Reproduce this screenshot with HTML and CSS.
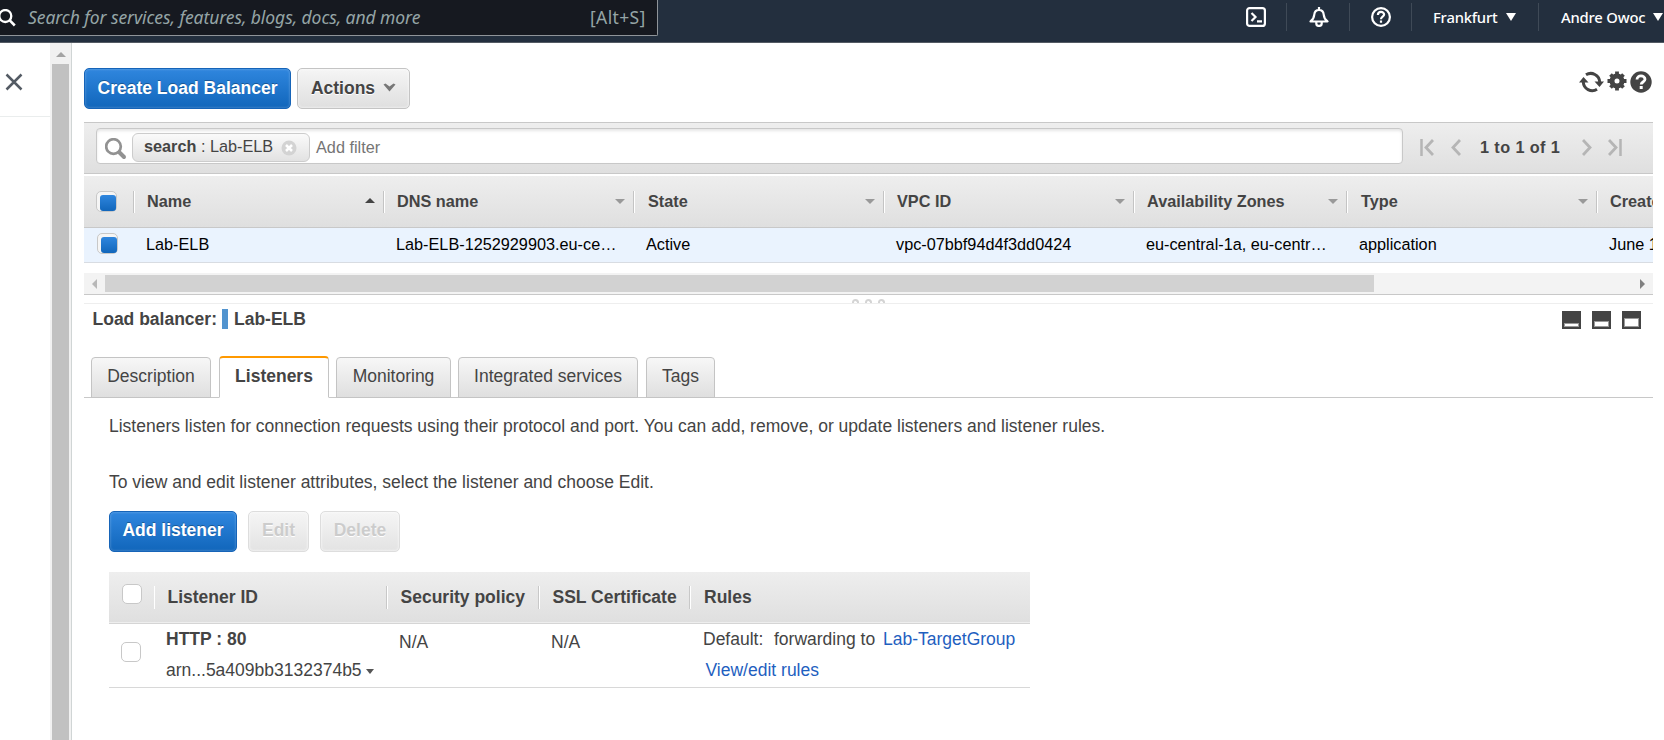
FILE: index.html
```html
<!DOCTYPE html>
<html lang="en">
<head>
<meta charset="utf-8">
<title>Load Balancers</title>
<link rel="stylesheet" href="styles.css">
</head>
<body>
<header class="topbar">
  <div class="global-search">
    <svg class="gs-icon" width="17" height="20" viewBox="0 0 17 20"><circle cx="5.300" cy="7" r="6" fill="none" stroke="#fff" stroke-width="2.300"/><path d="M9.500 11.200l5.300 5.300" stroke="#fff" stroke-width="2.600"/></svg>
    <span class="gs-text">Search for services, features, blogs, docs, and more</span>
    <span class="gs-key">[Alt+S]</span>
  </div>
  <nav class="top-nav">
    <span class="nav-item nav-shell"><svg width="20" height="20" viewBox="0 0 20 20" fill="none" stroke="#fff" stroke-width="2.200"><rect x="1.100" y="1.100" width="17.800" height="17.800" rx="2.500"/><path d="M5.500 6l4 4-4 4M11 14.300h5"/></svg></span>
    <span class="nav-item nav-bell"><svg width="20" height="20" viewBox="0 0 20 20" fill="none" stroke="#fff" stroke-width="2.200" stroke-linejoin="round"><path d="M10 0v3M1.500 14.500c3-2 3.500-4 3.800-7C5.600 4.500 7.500 3 10 3s4.400 1.500 4.700 4.500c.3 3 .8 5 3.800 7z"/><path d="M7.300 15v1.500c0 3.300 5.400 3.300 5.400 0V15"/></svg></span>
    <span class="nav-item nav-help"><svg width="20" height="20" viewBox="0 0 20 20" fill="none" stroke="#fff" stroke-width="2.200"><circle cx="10" cy="10" r="8.900"/><path d="M6.900 8c0-4 6.200-4 6.200-.5 0 2.200-3.100 2.200-3.100 4.700M10 13.500v2.200"/></svg></span>
    <span class="nav-item nav-region"><span class="region-text">Frankfurt</span><i class="tri"></i></span>
    <span class="nav-item nav-user"><span class="user-text">Andre Owoc</span><i class="tri"></i></span>
  </nav>
</header>
<div class="body">
  <aside class="side">
    <div class="side-head"><svg width="18" height="18" viewBox="0 0 18 18"><path d="M1.500 1.500l15 15M16.500 1.500l-15 15" stroke="#545b64" stroke-width="2.500"/></svg></div>
  </aside>
  <div class="vscroll"><i class="up"></i><div class="vthumb"></div></div>
  <main class="content">
    <div class="actions">
      <button class="btn primary create">Create Load Balancer</button>
      <button class="btn menu">Actions <svg width="13" height="9" viewBox="0 0 13 9"><path d="M.5 1.500L2.500 .5l4 3 4-3 2 1-6 7z" fill="#777"/></svg></button>
      <div class="tools">
        <svg width="25" height="22" viewBox="0 0 25 22"><path d="M7 3.800A9 9 0 0 1 20.700 11M18 18.300A9 9 0 0 1 4.300 11" fill="none" stroke="#444" stroke-width="3"/><path d="M0 11.500L4.500 6l5 5.500zM15.500 10.500h9.500L20.500 16z" fill="#444"/></svg>
        <svg class="gear" width="20" height="20" viewBox="0 0 20 20"><circle cx="10" cy="10" r="5" fill="none" stroke="#444" stroke-width="5"/><path d="M10 .5v4M10 15.500v4M.5 10h4M15.500 10h4M3.500 3.500l3 3M13.500 13.500l3 3M16.500 3.500l-3 3M6.500 13.500l-3 3" stroke="#444" stroke-width="3.800"/></svg>
        <svg class="q" width="22" height="22" viewBox="0 0 22 22"><circle cx="11" cy="11" r="10.700" fill="#444"/><path d="M7 8.500C7 3.500 15 4 15 8.200c0 2.800-3.800 2.800-3.800 5.300" fill="none" stroke="#fff" stroke-width="2.800"/><path d="M9.700 15h3v3h-3z" fill="#fff"/></svg>
      </div>
    </div>
    <div class="filterbar">
      <div class="filter">
        <svg class="mag" width="22" height="22" viewBox="0 0 22 22"><circle cx="8.500" cy="8.500" r="7.300" fill="none" stroke="#929292" stroke-width="2.700"/><path d="M14.500 14.500l4.500 4.500" stroke="#929292" stroke-width="4" stroke-linecap="round"/></svg>
        <span class="chip"><span class="chip-text"><b>search</b> : Lab-ELB</span><svg width="16" height="16" viewBox="0 0 16 16"><circle cx="8" cy="8" r="7.500" fill="#d3d3d3"/><path d="M5 5l6 6M11 5l-6 6" stroke="#fff" stroke-width="2.500"/></svg></span>
        <span class="add">Add filter</span>
      </div>
      <svg class="pg" width="14" height="18" viewBox="0 0 14 18" fill="none" stroke="#b5b5b5"><path d="M1.500 0v17" stroke-width="2.500"/><path d="M13 1L6 8.500l7 7.500" stroke-width="2.800"/></svg>
      <svg class="pg prev" width="10" height="18" viewBox="0 0 10 18" fill="none" stroke="#b5b5b5" stroke-width="2.800"><path d="M9 1L2 8.500 9 16"/></svg>
      <b class="pg-text">1 to 1 of 1</b>
      <svg class="pg next" width="10" height="18" viewBox="0 0 10 18" fill="none" stroke="#b5b5b5" stroke-width="2.800"><path d="M1 1l7 7.500L1 16"/></svg>
      <svg class="pg last" width="14" height="18" viewBox="0 0 14 18" fill="none" stroke="#b5b5b5"><path d="M1 1l7 7.500L1 16" stroke-width="2.800"/><path d="M12.500 0v17" stroke-width="2.500"/></svg>
    </div>
    <div class="grid-row grid-head">
      <div class="cell check"><i class="cb on"></i></div>
      <div class="cell">Name<i class="sort asc"></i></div>
      <div class="cell">DNS name<i class="sort"></i></div>
      <div class="cell state">State<i class="sort"></i></div>
      <div class="cell">VPC ID<i class="sort"></i></div>
      <div class="cell">Availability Zones<i class="sort"></i></div>
      <div class="cell type">Type<i class="sort"></i></div>
      <div class="cell">Created At</div>
    </div>
    <div class="grid-row grid-data">
      <div class="cell check"><i class="cb on"></i></div>
      <div class="cell">Lab-ELB</div>
      <div class="cell">Lab-ELB-1252929903.eu-ce…</div>
      <div class="cell">Active</div>
      <div class="cell">vpc-07bbf94d4f3dd0424</div>
      <div class="cell">eu-central-1a, eu-centr…</div>
      <div class="cell">application</div>
      <div class="cell">June 14</div>
    </div>
    <div class="hscroll"><i class="left"></i><div class="hthumb"></div><i class="right"></i></div>
    <div class="splitter"><i></i><i></i><i></i></div>
    <div class="detail-head">
      <span class="dh-label">Load balancer:</span><i class="dh-bar"></i><span class="dh-name">Lab-ELB</span>
      <div class="panes"><i class="pane small"></i><i class="pane half"></i><i class="pane full"></i></div>
    </div>
    <div class="tabs">
      <div class="tab t1">Description</div>
      <div class="tab t2 active">Listeners</div>
      <div class="tab t3">Monitoring</div>
      <div class="tab t4">Integrated services</div>
      <div class="tab t5">Tags</div>
    </div>
    <section class="panel">
      <p class="p1">Listeners listen for connection requests using their protocol and port. You can add, remove, or update listeners and listener rules.</p>
      <p class="p2">To view and edit listener attributes, select the listener and choose Edit.</p>
      <div class="panel-actions">
        <button class="btn primary addl">Add listener</button>
        <button class="btn off edit">Edit</button>
        <button class="btn off del">Delete</button>
      </div>
      <div class="ltable">
        <div class="lrow lhead">
          <div class="lc lcheck"><i class="cb"></i></div>
          <div class="lc">Listener ID</div>
          <div class="lc">Security policy</div>
          <div class="lc">SSL Certificate</div>
          <div class="lc">Rules</div>
        </div>
        <div class="lrow ldata">
          <div class="lc lcheck"><i class="cb"></i></div>
          <div class="lc"><b class="proto">HTTP : 80</b><span class="arn">arn...5a409bb3132374b5<i class="caret"></i></span></div>
          <div class="lc na">N/A</div>
          <div class="lc na">N/A</div>
          <div class="lc"><span class="rule"><span class="def">Default:</span><span class="fwd">forwarding to</span><a>Lab-TargetGroup</a></span><a class="view">View/edit rules</a></div>
        </div>
      </div>
    </section>
  </main>
</div>
</body>
</html>
```

FILE: styles.css
```css
*, *::before, *::after { box-sizing: border-box; }
body { margin: 0; width: 1664px; height: 740px; overflow: hidden; background: #fff; color: #444; font: 17.5px "Liberation Sans", Arial, sans-serif; display: flex; flex-direction: column; }
svg { display: block; flex: none; }
i { flex: none; }
p { margin: 0; }

/* Top navigation */
.topbar { height: 43px; flex: none; background: #232f3e; border-bottom: 1px solid #545b64; display: flex; justify-content: space-between; font-family: "Noto Sans", "Open Sans", sans-serif; overflow: hidden; }
.global-search { width: 658px; height: 36px; background: #161920; border: solid #8f9499; border-width: 0 1px 1px 0; border-radius: 0 0 2px 0; display: flex; color: #95a5a6; font-size: 17.5px; line-height: 34px; white-space: nowrap; }
.gs-icon { margin-top: 9px; }
.gs-text { margin-left: 11px; width: 562px; font-style: italic; letter-spacing: -0.07px; }
.gs-key { letter-spacing: 0.35px; }
.top-nav { display: flex; height: 28px; margin-top: 3px; color: #fff; font-size: 14.8px; font-weight: 500; white-space: nowrap; }
.nav-item { display: flex; align-items: center; border-right: 1px solid #3f4a57; }
.nav-shell { width: 41px; }
.nav-bell { width: 63px; padding-left: 22px; }
.nav-help { width: 62px; padding-left: 21px; }
.nav-region { width: 127px; padding-left: 21px; }
.nav-user { width: 125px; padding-left: 22px; border: 0; }
.region-text { width: 73px; letter-spacing: -0.2px; }
.user-text { width: 92px; letter-spacing: -0.2px; }
.tri { border: solid transparent; border-width: 8px 5px 0; border-top-color: #fff; }

/* Side panel and its scrollbar */
.body { flex: 1; display: flex; }
.side { width: 50px; }
.side-head { height: 74px; border-bottom: 1px solid #eaeded; padding: 30px 0 0 5px; }
.vscroll { width: 22px; background: #f1f1f1; border-right: 1px solid #d0d5d5; display: flex; flex-direction: column; align-items: center; padding-top: 9px; }
.up { border: solid transparent; border-width: 0 5px 5px; border-bottom-color: #a3a3a3; }
.vthumb { width: 17px; flex: 1; margin-top: 7px; background: #c1c1c1; }
.content { width: 1569px; margin-left: 12px; display: flex; flex-direction: column; }

/* Buttons */
.actions { display: flex; height: 79px; padding-top: 25px; gap: 6px; }
.btn { height: 41px; padding: 0 0 2px; border: 1px solid #c4c4c4; border-radius: 5px; background: linear-gradient(#f5f5f5, #dfdfdf); box-shadow: inset 0 0 2px 1px rgba(255,255,255,.45); color: #444; font: bold 17.5px "Liberation Sans", Arial, sans-serif; text-shadow: 0 1px 0 #fff; display: flex; align-items: center; justify-content: center; white-space: nowrap; }
.btn.primary { border-color: #1664b8; background: linear-gradient(#2f86de, #1166bb); box-shadow: inset 0 0 2px 1px rgba(255,255,255,.15); color: #fff; text-shadow: 0 -1px 0 rgba(0,0,0,.3); }
.btn.off { color: #ccc; border-color: #ddd; background: linear-gradient(#f5f5f5, #e3e3e3); }
.create { width: 207px; padding-bottom: 0; }
.menu { width: 113px; gap: 8px; padding-bottom: 0; }
.menu svg { margin-bottom: 3px; }
.tools { margin-left: auto; margin-top: 3px; padding-right: 1px; display: flex; height: 22px; }
.gear { margin: 0 3px 0; }

/* Filter bar */
.filterbar { height: 52px; border: solid #c8c8c8; border-width: 1px 0; background: linear-gradient(#eee, #dfdfdf); display: flex; padding: 5px 0 0 12px; }
.filter { width: 1307px; height: 36px; background: #fff; border: 1px solid #c8c8c8; border-radius: 4px; box-shadow: inset 0 2px 3px rgba(0,0,0,.1); display: flex; padding: 4px 0 0 8px; font-size: 16.25px; }
.mag { margin: 5px 5px 0 0; }
.chip { width: 178px; height: 29px; border: 1px solid #ccc; border-radius: 6px; background: linear-gradient(#fafafa, #e2e2e2); display: flex; align-items: center; padding-left: 11px; line-height: 25px; white-space: nowrap; }
.chip-text { width: 137px; padding-bottom: 2px; }
.add { margin-left: 6px; line-height: 28px; color: #757575; }
.pg { margin: 11px 0 0 17px; }
.pg.prev { margin-left: 17px; }
.pg-text { margin: 10px 0 0 19px; width: 82px; font-size: 16.25px; line-height: 19px; letter-spacing: 0.4px; white-space: nowrap; }
.pg.next { margin-left: 20px; }
.pg.last { margin-left: 16px; }

/* Load balancer grid */
.grid-row { display: grid; grid-template-columns: 51px 250px 250px 250px 250px 213px 250px 55px; overflow: hidden; white-space: nowrap; font-size: 16.25px; }
.grid-head { height: 52px; margin-top: 2px; background: linear-gradient(#eee, #dfdfdf); border-bottom: 1px solid #c8c8c8; font-weight: bold; align-items: center; }
.grid-head .cell { display: flex; align-items: center; justify-content: space-between; height: 22px; padding: 0 9px 1px 12px; border-right: 1px solid #fff; box-shadow: inset -1px 0 #c4c4c4; overflow: hidden; }
.grid-head .cell:last-child { border: 0; box-shadow: none; padding-right: 0; }
.grid-head .check { overflow: visible; padding: 0 0 0 12px; }
.grid-head .state, .grid-head .type { padding-left: 13px; }
.sort { border: solid transparent; border-width: 5px 5px 0; border-top-color: #999; margin-top: 1px; }
.sort.asc { border-width: 0 5px 5px; border-bottom-color: #444; margin-top: -2px; }
.grid-data { height: 35px; background: #eaf3fe; border-bottom: 1px solid #d8dce2; color: #000; line-height: 32px; }
.grid-data .cell { padding-left: 11px; overflow: hidden; }
.grid-data .check { padding: 5px 0 0 13px; }
.cb { display: block; width: 20px; height: 20px; border: 1px solid #c8c8c8; border-radius: 5px; background: #fff; }
.cb.on { width: 21px; height: 21px; background: #f5f5f5; padding: 3px 0 0 3px; }
.cb.on::after { content: ""; display: block; width: 16px; height: 16px; border-radius: 3px; background: linear-gradient(#2f86de, #1166bb); }
.hscroll { height: 22px; margin-top: 10px; background: #f3f3f3; border-bottom: 1px solid #c8c8c8; display: flex; align-items: center; }
.left { margin-left: 8px; border: solid transparent; border-width: 5px 5px 5px 0; border-right-color: #b8b8b8; }
.hthumb { width: 1269px; height: 17px; margin-left: 8px; background: #d2d2d2; }
.right { margin-left: 266px; border: solid transparent; border-width: 5px 0 5px 5px; border-left-color: #808080; }
.splitter { height: 9px; border-bottom: 1px solid #eee; display: flex; gap: 6px; padding: 4px 0 0 768px; }
.splitter i { width: 7px; height: 4px; border: 2px solid #d4d4d4; border-bottom: 0; border-radius: 4px 4px 0 0; }

/* Detail pane */
.detail-head { height: 52px; display: flex; padding: 5px 0 0 8px; font-weight: bold; line-height: 20px; white-space: nowrap; }
.dh-label { width: 130px; padding-left: 0.5px; }
.dh-bar { width: 6px; height: 20px; background: #5294cf; margin-right: 6px; }
.panes { display: flex; margin-left: auto; padding: 2px 12px 0 0; gap: 11px; }
.pane { width: 19px; height: 18px; background: #444; padding: 12px 2px 2px; }
.pane::after { content: ""; display: block; height: 4px; background: #fff; border: 1px solid #999; }
.half { padding-top: 10px; }
.half::after { height: 6px; }
.full { padding-top: 7px; }
.full::after { height: 9px; }
.tabs { display: flex; align-items: flex-end; height: 42px; padding-left: 7px; box-shadow: inset 0 -1px #c8c8c8; white-space: nowrap; }
.tab { height: 41px; border: 1px solid #c4c4c4; border-radius: 4px 4px 0 0; background: linear-gradient(#f7f7f7, #dfdfdf); text-align: center; line-height: 37px; }
.tab.active { height: 42px; border-top: 2px solid #f90; border-bottom-color: #fff; background: #fff; font-weight: bold; }
.t1 { width: 120px; }
.t2 { width: 110px; margin: 0 7px 0 8px; }
.t3 { width: 115px; }
.t4 { width: 180px; margin: 0 8px 0 7px; }
.t5 { width: 69px; }
.panel { padding: 16px 0 0 25px; }
.p1, .p2 { line-height: 24px; white-space: nowrap; }
.p2 { margin-top: 32px; }
.panel-actions { display: flex; margin-top: 17px; gap: 11px; }
.addl { width: 128px; }
.edit { width: 61px; }
.del { width: 80px; }
.ltable { width: 921px; margin-top: 20px; }
.lrow { display: grid; grid-template-columns: 46px 233px 152px 151px 339px; white-space: nowrap; }
.lhead { height: 52px; background: linear-gradient(#eee, #dfdfdf); border-bottom: 1px solid #d5d5d5; box-shadow: inset 0 -1px #eee; font-weight: bold; padding-top: 14px; }
.lhead .lc { height: 23px; line-height: 22px; padding-left: 12.5px; border-right: 1px solid #fff; box-shadow: inset -1px 0 #c8c8c8; }
.lhead .lc:last-child { border: 0; box-shadow: none; padding-left: 13px; }
.lhead .lcheck { padding-left: 13px; box-shadow: none; }
.lhead .cb { margin-top: -2px; }
.ldata { height: 64px; border-bottom: 1px solid #d8d8d8; }
.ldata .lc { padding-left: 11px; display: flex; flex-direction: column; }
.ldata .lc:last-child { padding-left: 12px; }
.ldata .lcheck { padding: 18px 0 0 12px; }
.proto { line-height: 30px; }
.arn { display: flex; align-items: center; line-height: 33px; }
.caret { border: solid transparent; border-width: 5px 4.5px 0; border-top-color: #555; margin: 2px 0 0 4px; }
.ldata .na { line-height: 36px; }
.rule { display: flex; line-height: 30px; }
.def { width: 71px; }
.fwd { width: 109px; }
a { color: #1f5fbf; }
.view { padding-left: 2.5px; line-height: 32px; }
```
